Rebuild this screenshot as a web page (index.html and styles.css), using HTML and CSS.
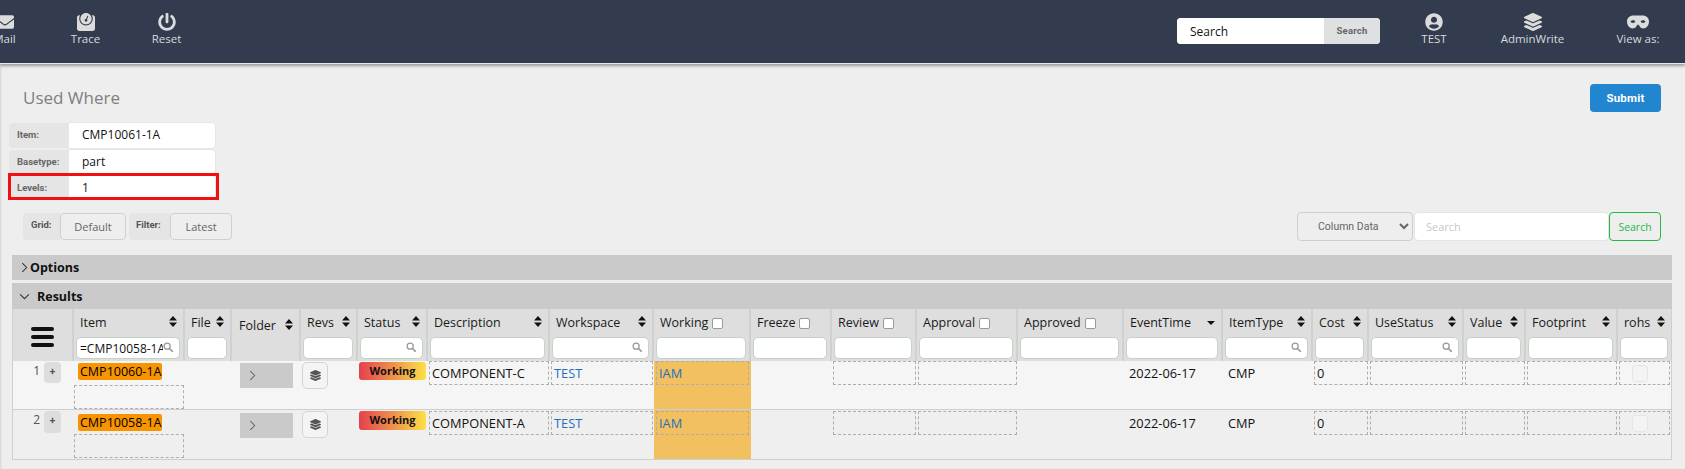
FILE: index.html
```html
<!DOCTYPE html>
<html lang="en">
<head>
<meta charset="utf-8">
<title>Used Where</title>
<link rel="stylesheet" href="styles.css">
</head>
<body>
<svg class="defs" width="0" height="0" aria-hidden="true">
  <defs>
    <symbol id="i-sort" viewBox="0 0 8 11"><path d="M4 0 8 4.6H0zM0 6.4h8L4 11z"/></symbol>
    <symbol id="i-search" viewBox="0 0 12 12"><circle cx="5" cy="5" r="3.6" fill="none" stroke="currentColor" stroke-width="1.5"/><path d="M7.8 7.8 11 11" stroke="currentColor" stroke-width="2" stroke-linecap="round"/></symbol>
    <symbol id="i-layers" viewBox="0 0 512 512"><path d="M12.41 148.02l232.94 105.67c6.8 3.09 14.49 3.09 21.29 0l232.94-105.67c16.55-7.51 16.55-32.52 0-40.03L266.65 2.31a25.607 25.607 0 0 0-21.29 0L12.41 107.98c-16.55 7.51-16.55 32.53 0 40.04zm487.18 88.28l-58.09-26.33-161.64 73.27c-7.56 3.43-15.59 5.17-23.86 5.17s-16.29-1.74-23.86-5.17L70.51 209.97l-58.1 26.33c-16.55 7.5-16.55 32.5 0 40l232.94 105.59c6.8 3.08 14.49 3.08 21.29 0L499.59 276.3c16.55-7.5 16.55-32.5 0-40zm0 127.8l-57.87-26.23-161.86 73.37c-7.56 3.43-15.59 5.17-23.86 5.17s-16.29-1.74-23.86-5.17L70.29 337.87 12.41 364.1c-16.55 7.5-16.55 32.5 0 40l232.94 105.59c6.8 3.08 14.49 3.08 21.29 0L499.59 404.1c16.55-7.5 16.55-32.5 0-40z"/></symbol>
    <symbol id="i-chev" viewBox="0 0 8 12"><path d="M1.5 1 6.5 6l-5 5" fill="none" stroke="currentColor" stroke-width="1.2"/></symbol>
  </defs>
</svg>

<header class="topbar">
  <nav class="nav-left">
    <a class="nav-item"><svg class="nav-icon" viewBox="0 0 512 512"><path d="M502.3 190.8c3.9-3.1 9.7-.2 9.7 4.7V400c0 26.5-21.5 48-48 48H48c-26.5 0-48-21.5-48-48V195.6c0-5 5.7-7.8 9.7-4.7 22.4 17.4 52.1 39.5 154.1 113.6 21.1 15.4 56.7 47.8 92.2 47.6 35.7.3 72-32.8 92.3-47.6 102-74.1 131.6-96.3 154-113.7zM256 320c23.2.4 56.6-29.2 73.4-41.4 132.7-96.3 142.8-104.7 173.4-128.7 5.8-4.5 9.2-11.5 9.2-18.9v-19c0-26.5-21.5-48-48-48H48C21.5 64 0 85.5 0 112v19c0 7.4 3.4 14.3 9.2 18.9 30.6 23.9 40.7 32.4 173.4 128.7 16.8 12.2 50.2 41.8 73.4 41.4z"/></svg><span>Mail</span></a>
    <a class="nav-item"><svg class="nav-icon" viewBox="0 0 512 512"><path d="M448 64h-25.98C438.44 92.28 448 125.01 448 160c0 105.87-86.13 192-192 192S64 265.87 64 160c0-34.99 9.56-67.72 25.98-96H64C28.71 64 0 92.71 0 128v320c0 35.29 28.71 64 64 64h384c35.29 0 64-28.71 64-64V128c0-35.29-28.71-64-64-64zM256 320c88.37 0 160-71.63 160-160S344.37 0 256 0 96 71.63 96 160s71.63 160 160 160zm-.3-151.94l33.58-78.36c3.5-8.17 12.94-11.92 21.03-8.41 8.12 3.48 11.88 12.89 8.41 21l-33.67 78.55C291.73 188 296 197.45 296 208c0 22.09-17.91 40-40 40s-40-17.91-40-40c0-21.98 17.76-39.77 39.7-39.94z"/></svg><span>Trace</span></a>
    <a class="nav-item"><svg class="nav-icon" viewBox="0 0 512 512"><path d="M400 54.1c63 45 104 118.6 104 201.9 0 136.8-110.8 247.7-247.5 248C120 504.3 8.2 393 8 256.4 7.9 173.1 48.9 99.3 111.8 54.2c11.7-8.3 28-4.8 35 7.7L162.6 90c5.9 10.5 3.1 23.8-6.6 31-41.5 30.8-68 79.6-68 134.9-.1 92.3 74.5 168.1 168 168.1 91.6 0 168.6-74.2 168-169.1-.3-51.8-24.7-101.8-68.1-134-9.7-7.2-12.4-20.5-6.5-30.9l15.8-28.1c7-12.4 23.2-16.1 34.8-7.8zM296 264V24c0-13.3-10.7-24-24-24h-32c-13.3 0-24 10.7-24 24v240c0 13.3 10.7 24 24 24h32c13.3 0 24-10.7 24-24z"/></svg><span>Reset</span></a>
  </nav>
  <form class="top-search">
    <input class="top-search-input" value="Search">
    <span class="top-search-btn">Search</span>
  </form>
  <nav class="nav-right">
    <a class="nav-item nav-test"><svg class="nav-icon" viewBox="0 0 496 512"><path d="M248 8C111 8 0 119 0 256s111 248 248 248 248-111 248-248S385 8 248 8zm0 96c48.6 0 88 39.4 88 88s-39.4 88-88 88-88-39.4-88-88 39.4-88 88-88zm0 344c-58.7 0-111.3-26.6-146.5-68.2 18.8-35.4 55.6-59.8 98.5-59.8 2.4 0 4.8.4 7.1 1.1 13 4.2 26.6 6.9 40.9 6.9 14.3 0 28-2.7 40.9-6.9 2.3-.7 4.7-1.1 7.1-1.1 42.9 0 79.7 24.4 98.5 59.8C359.3 421.4 306.7 448 248 448z"/></svg><span>TEST</span></a>
    <a class="nav-item nav-admin"><svg class="nav-icon" viewBox="0 0 512 512"><use href="#i-layers"/></svg><span>AdminWrite</span></a>
    <a class="nav-item nav-view"><svg class="nav-icon nav-mask" viewBox="0 0 24 16"><path fill-rule="evenodd" d="M7 1h10c4 0 7 2.800 7 6.500C24 12 21 15 18 15c-2.500 0-3.800-1.500-4.600-3-.5-1-1.500-1.400-1.400-1.400s-.9.4-1.400 1.400C9.800 13.500 8.500 15 6 15 3 15 0 12 0 7.500 0 3.800 3 1 7 1zM6.500 6C5 6 4 6.700 4 7.500S5 9 6.500 9 9 8.300 9 7.500 8 6 6.500 6zm11 0C16 6 15 6.700 15 7.500S16 9 17.500 9 20 8.300 20 7.500 19 6 17.500 6z"/></svg><span>View as:</span></a>
  </nav>
</header>

<main class="page">
  <div class="title-row">
    <h1 class="title">Used Where</h1>
    <button class="submit" type="button">Submit</button>
  </div>

  <div class="props">
    <div class="prop prop-item"><span class="prop-label">Item:</span><span class="prop-value">CMP10061-1A</span></div>
    <div class="prop prop-base"><span class="prop-label">Basetype:</span><span class="prop-value">part</span></div>
    <div class="prop prop-levels"><span class="prop-label">Levels:</span><span class="prop-value">1</span></div>
  </div>

  <div class="tools">
    <div class="tools-left">
      <span class="tool-label tool-grid">Grid:</span><button class="tool-btn tool-default" type="button">Default</button>
      <span class="tool-label tool-filter">Filter:</span><button class="tool-btn tool-latest" type="button">Latest</button>
    </div>
    <div class="tools-right">
      <select class="col-select"><option>Column Data</option></select>
      <input class="col-search" placeholder="Search">
      <button class="col-btn" type="button">Search</button>
    </div>
  </div>

  <section class="bar bar-options"><svg class="bar-chev"><use href="#i-chev"/></svg><b>Options</b></section>
  <section class="bar bar-results"><svg class="bar-chev bar-chev-down"><use href="#i-chev"/></svg><b>Results</b></section>

  <div class="grid">
    <div class="cols head">
      <div class="th th-menu"><span class="burger"><i></i><i></i><i></i></span></div>
      <div class="th"><div class="th-top"><span>Item</span><svg class="sort"><use href="#i-sort"/></svg></div><div class="filter"><input class="filter-input" value="=CMP10058-1A"><svg class="mag"><use href="#i-search"/></svg></div></div>
      <div class="th"><div class="th-top"><span>File</span><svg class="sort"><use href="#i-sort"/></svg></div><div class="filter"><input class="filter-input"></div></div>
      <div class="th th-folder"><div class="th-top"><span>Folder</span><svg class="sort"><use href="#i-sort"/></svg></div></div>
      <div class="th"><div class="th-top"><span>Revs</span><svg class="sort"><use href="#i-sort"/></svg></div><div class="filter"><input class="filter-input"></div></div>
      <div class="th"><div class="th-top"><span>Status</span><svg class="sort"><use href="#i-sort"/></svg></div><div class="filter"><input class="filter-input"><svg class="mag"><use href="#i-search"/></svg></div></div>
      <div class="th"><div class="th-top"><span>Description</span><svg class="sort"><use href="#i-sort"/></svg></div><div class="filter"><input class="filter-input"></div></div>
      <div class="th"><div class="th-top"><span>Workspace</span><svg class="sort"><use href="#i-sort"/></svg></div><div class="filter"><input class="filter-input"><svg class="mag"><use href="#i-search"/></svg></div></div>
      <div class="th"><div class="th-top th-check"><span>Working</span><i class="box"></i></div><div class="filter"><input class="filter-input"></div></div>
      <div class="th"><div class="th-top th-check"><span>Freeze</span><i class="box"></i></div><div class="filter"><input class="filter-input"></div></div>
      <div class="th"><div class="th-top th-check"><span>Review</span><i class="box"></i></div><div class="filter"><input class="filter-input"></div></div>
      <div class="th"><div class="th-top th-check"><span>Approval</span><i class="box"></i></div><div class="filter"><input class="filter-input"></div></div>
      <div class="th"><div class="th-top th-check"><span>Approved</span><i class="box"></i></div><div class="filter"><input class="filter-input"></div></div>
      <div class="th"><div class="th-top"><span>EventTime</span><i class="caret"></i></div><div class="filter"><input class="filter-input"></div></div>
      <div class="th"><div class="th-top"><span>ItemType</span><svg class="sort"><use href="#i-sort"/></svg></div><div class="filter"><input class="filter-input"><svg class="mag"><use href="#i-search"/></svg></div></div>
      <div class="th"><div class="th-top"><span>Cost</span><svg class="sort"><use href="#i-sort"/></svg></div><div class="filter"><input class="filter-input"></div></div>
      <div class="th"><div class="th-top"><span>UseStatus</span><svg class="sort"><use href="#i-sort"/></svg></div><div class="filter"><input class="filter-input"><svg class="mag"><use href="#i-search"/></svg></div></div>
      <div class="th"><div class="th-top"><span>Value</span><svg class="sort"><use href="#i-sort"/></svg></div><div class="filter"><input class="filter-input"></div></div>
      <div class="th"><div class="th-top"><span>Footprint</span><svg class="sort"><use href="#i-sort"/></svg></div><div class="filter"><input class="filter-input"></div></div>
      <div class="th th-last"><div class="th-top"><span>rohs</span><svg class="sort"><use href="#i-sort"/></svg></div><div class="filter"><input class="filter-input"></div></div>
    </div>

    <div class="cols row row-a">
      <div class="td td-num"><span class="num">1</span><span class="plus">+</span></div>
      <div class="td td-item"><span class="chip">CMP10060-1A</span><span class="dash dash-item"></span></div>
      <div class="td"></div>
      <div class="td td-folder"><span class="folder"><svg class="folder-chev"><use href="#i-chev"/></svg></span></div>
      <div class="td td-revs"><span class="revs"><svg class="revs-icon"><use href="#i-layers"/></svg></span></div>
      <div class="td td-status"><span class="status">Working</span></div>
      <div class="td"><span class="dash">COMPONENT-C</span></div>
      <div class="td"><span class="dash link">TEST</span></div>
      <div class="td td-working"><span class="dash link">IAM</span></div>
      <div class="td"></div>
      <div class="td"><span class="dash"></span></div>
      <div class="td"><span class="dash dash-approval"></span></div>
      <div class="td"></div>
      <div class="td td-plain">2022-06-17</div>
      <div class="td td-plain">CMP</div>
      <div class="td"><span class="dash">0</span></div>
      <div class="td"><span class="dash"></span></div>
      <div class="td"><span class="dash"></span></div>
      <div class="td"><span class="dash"></span></div>
      <div class="td td-rohs"><span class="dash dash-rohs"><i class="rohs-box"></i></span></div>
    </div>

    <div class="cols row row-b">
      <div class="td td-num"><span class="num">2</span><span class="plus">+</span></div>
      <div class="td td-item"><span class="chip">CMP10058-1A</span><span class="dash dash-item"></span></div>
      <div class="td"></div>
      <div class="td td-folder"><span class="folder"><svg class="folder-chev"><use href="#i-chev"/></svg></span></div>
      <div class="td td-revs"><span class="revs"><svg class="revs-icon"><use href="#i-layers"/></svg></span></div>
      <div class="td td-status"><span class="status">Working</span></div>
      <div class="td"><span class="dash">COMPONENT-A</span></div>
      <div class="td"><span class="dash link">TEST</span></div>
      <div class="td td-working"><span class="dash link">IAM</span></div>
      <div class="td"></div>
      <div class="td"><span class="dash"></span></div>
      <div class="td"><span class="dash dash-approval"></span></div>
      <div class="td"></div>
      <div class="td td-plain">2022-06-17</div>
      <div class="td td-plain">CMP</div>
      <div class="td"><span class="dash">0</span></div>
      <div class="td"><span class="dash"></span></div>
      <div class="td"><span class="dash"></span></div>
      <div class="td"><span class="dash"></span></div>
      <div class="td td-rohs"><span class="dash dash-rohs"><i class="rohs-box"></i></span></div>
    </div>
  </div>
</main>
</body>
</html>
```

FILE: styles.css
```css
* { box-sizing: border-box; }
html, body { margin: 0; height: 100%; overflow: hidden; }
body { background: #eeeeee; font-family: "Open Sans", "Noto Sans", sans-serif; font-size: 12px; color: #111; }
.defs { position: absolute; }

/* top bar */
.topbar { height: 64px; background: #333c4e; border-bottom: 1px solid #e8e8e8; box-shadow: 0 2px 3px rgba(0,0,0,.35); display: flex; align-items: flex-start; position: relative; }
.nav-left { display: flex; margin-left: -36px; }
.nav-right { display: flex; margin-left: 14px; }
.nav-item { width: 81px; height: 63px; padding-top: 13px; display: flex; flex-direction: column; align-items: center; color: #d6d9de; font-size: 11.5px; line-height: 16px; }
.nav-icon { width: 18px; height: 18px; fill: #dcdcdc; margin-bottom: 0; flex: none; }
.nav-mask { width: 22px; }
.nav-test { width: 80px; }
.nav-admin { width: 117px; }
.nav-view { width: 94px; }
.top-search { margin: 18px 0 0 auto; width: 203px; height: 26px; display: flex; border-radius: 4px; overflow: hidden; background: #fff; }
.top-search-input { flex: 1; width: 0; border: 0; padding: 0 0 0 13px; font: 12px "Open Sans", sans-serif; color: #111; outline: none; background: #fff; }
.top-search-btn { width: 56px; background: #dfe0e2; color: #666; font: 700 9.5px/25px Roboto, sans-serif; text-align: center; letter-spacing: .2px; }

/* page */
.page { padding: 0 13px 0 9px; box-shadow: inset 2px 0 2px -1px #d4d4d4; height: 405px; }
.title-row { display: flex; justify-content: space-between; align-items: center; padding: 19px 11px 0 14px; }
.title { margin: 0; padding-top: 1px; font-weight: 400; font-size: 17px; line-height: 28px; color: #7f7f7f; }
.submit { width: 71px; height: 28px; border: 0; border-radius: 4px; background: #2185d0; color: #fff; font: 700 11.5px Roboto, sans-serif; letter-spacing: .2px; }

.props { margin-top: 11px; width: 206px; }
.prop { display: flex; background: #e5e5e5; border-radius: 4px; overflow: visible; }
.prop-item { height: 25px; margin-bottom: 2px; }
.prop-base { height: 24px; margin-bottom: 2px; }
.prop-levels { height: 22px; position: relative; }
.prop-levels::after { content: ""; position: absolute; left: -1px; right: -4px; top: -3px; bottom: -2px; border: 3px solid #f01010; }
.prop-label { width: 60px; flex: none; padding-left: 8px; font: 700 9.5px/23px Roboto, sans-serif; color: #666; }
.prop-value { flex: 1; background: #fff; border-radius: 0 4px 4px 0; padding-left: 13px; font-size: 12px; line-height: 24px; color: #111; box-shadow: 0 0 0 1px #e6e6e6; }

.tools { display: flex; justify-content: space-between; align-items: flex-start; margin-top: 14px; padding: 0 11px 0 14px; }
.tools-left { display: flex; align-items: center; height: 28px; margin-top: 0; }
.tool-label { height: 27px; background: #e5e5e5; border-radius: 4px 0 0 4px; font: 700 9.5px/24px Roboto, sans-serif; color: #555; padding-left: 8px; }
.tool-grid { width: 37px; }
.tool-filter { width: 41px; margin-left: 3px; padding-left: 7px; }
.tool-btn { height: 27px; background: #eee; border: 1px solid #d0d0d0; border-radius: 4px; color: #666; font: 400 11px "Open Sans", sans-serif; padding: 0; }
.tool-default { width: 66px; }
.tool-latest { width: 62px; }
.tools-right { display: flex; height: 29px; }
.col-select { width: 116px; height: 29px; border: 1px solid #cfcfcf; border-radius: 4px; background: #eee; color: #666; font: 400 10.5px Roboto, sans-serif; padding-left: 16px; }
.col-search { width: 195px; height: 29px; margin-left: 1px; border: 1px solid #e4e4e4; border-radius: 4px; background: #fff; font: 11px "Open Sans", sans-serif; padding: 0 0 0 11px; }
.col-search::placeholder { color: #c8c8c8; }
.col-btn { width: 52px; height: 29px; margin-left: 0; background: #eee; border: 1px solid #21ba45; border-radius: 4px; color: #21ba45; font: 400 10.5px "Open Sans", sans-serif; padding: 0; }

.bar { margin-left: 3px; width: 1660px; background: #cacaca; display: flex; align-items: center; font-size: 12.5px; color: #111; }
.bar-options { height: 25px; margin-top: 14px; padding-left: 9px; }
.bar-results { height: 26px; margin-top: 3px; padding-left: 6px; }
.bar-chev { width: 7px; height: 11px; color: #333; margin-right: 2px; }
.bar-chev-down { transform: rotate(90deg); margin: 0 9px 0 3px; }

/* results grid */
.grid { margin-left: 3px; width: 1660px; border: 1px solid #cfcfcf; border-top: 0; }
.cols { display: grid; grid-template-columns: 61px 111px 47px 69px 57px 70px 122px 104px 97px 81px 85px 101px 106px 99px 90px 56px 95px 62px 92px 53px; }
.head { height: 52px; background: #dedede; }
.th { display: flex; flex-direction: column; border-right: 2px solid #d0d0d0; padding: 4px 3px 0 2px; font-size: 12.5px; color: #1a1a1a; min-width: 0; }
.th-last { border-right: 0; }
.th-top { height: 21px; display: flex; justify-content: space-between; align-items: flex-start; padding: 1px 3px 0 4px; line-height: 18px; white-space: nowrap; }
.th-check { justify-content: flex-start; gap: 4px; }
.th-folder .th-top { padding-top: 4px; padding-left: 5px; }
.sort { width: 8px; height: 11px; fill: #111; margin-top: 2px; flex: none; }
.box { width: 11px; height: 11px; margin-top: 4px; background: #fff; border: 1px solid #999; border-radius: 2px; flex: none; }
.caret { width: 0; height: 0; border: 4px solid transparent; border-top: 4px solid #111; border-bottom: 0; margin: 7px 0 0; }
.filter { position: relative; height: 22px; margin-top: 3px; }
.filter-input { width: 100%; height: 22px; display: block; border: 1px solid #c4d4c4; border-radius: 5px; background: #fff; padding: 0 16px 0 3px; font: 12px "Open Sans", sans-serif; color: #111; outline: none; }
.mag { position: absolute; right: 7px; top: 5px; width: 10px; height: 10px; color: #999; }
.th-menu { align-items: center; justify-content: center; padding: 4px 0 0; }
.burger { display: flex; flex-direction: column; gap: 4px; width: 23px; }
.burger i { height: 4px; background: #111; border-radius: 2px; }

.row { height: 48px; background: #f5f5f5; font-size: 12.8px; }
.row .td { min-width: 0; }
.row-b { height: 50px; border-top: 1px solid #cfcfcf; padding-top: 1px; background: #efefef; }
.td { padding: 0 1px; margin-top: 0; }
.td-num { display: flex; justify-content: flex-end; padding: 1px 13px 0 0; }
.row-b .td-num { padding-top: 0; }
.num { margin-right: 4px; line-height: 18px; color: #555; font-size: 12px; }
.plus { width: 17px; height: 21px; background: #ddd; border-radius: 4px; text-align: center; font: 700 10px/20px Roboto, sans-serif; color: #555; }
.row-b .plus { height: 22px; }
.td-item { padding: 2px 0 0; display: flex; flex-direction: column; align-items: flex-start; }
.row-b .td-item { padding-top: 3px; }
.chip { margin-left: 4px; height: 17px; width: 84px; background: #f79400; border-radius: 2px; padding-left: 2px; font-size: 12.5px; line-height: 17px; color: #000; white-space: nowrap; }
.dash { display: flex; align-items: center; height: 24px; border: 1px dashed #aeaeae; padding-left: 2px; white-space: nowrap; }
.row .dash-item { width: 110px; height: 24px; margin-top: 5px; }
.row-b .dash-item { height: 24px; margin-top: 3px; }
.link { color: #1e70bf; }
.td-folder { padding: 2px 0 0 8px; }
.folder { display: flex; align-items: center; width: 53px; height: 25px; background: #cacaca; padding-left: 9px; }
.folder-chev { width: 7px; height: 11px; color: #666; }
.td-revs { padding: 1px 0 0 1px; }
.row-b .td-revs { padding-top: 0; }
.revs { display: flex; align-items: center; justify-content: center; width: 26px; height: 27px; background: #f4f4f4; border: 1px solid #d4d4d4; border-radius: 5px; }
.revs-icon { width: 11px; height: 11px; fill: #555; }
.td-status { padding: 1px 0 0 1px; }
.row-b .td-status { padding-top: 0; }
.status { display: block; width: 67px; height: 18px; border-radius: 3px; background: linear-gradient(90deg, #e5404d 0%, #f0a04a 60%, #fde047 100%); text-align: center; font: 700 11px/17px "Open Sans", sans-serif; color: #111; }
.row-b .status { height: 19px; }
.td-working { background: #f2c05e; padding: 0 2px; }
.row-b .td-working { margin-top: -1px; padding-top: 1px; }
.td-plain { display: flex; align-items: center; height: 24px; padding-left: 5px; }
.dash-rohs { padding: 0 0 0 12px; }
.rohs-box { width: 16px; height: 17px; background: #f3f3f3; border: 1px solid #e6e6e6; border-radius: 3px; }
```
